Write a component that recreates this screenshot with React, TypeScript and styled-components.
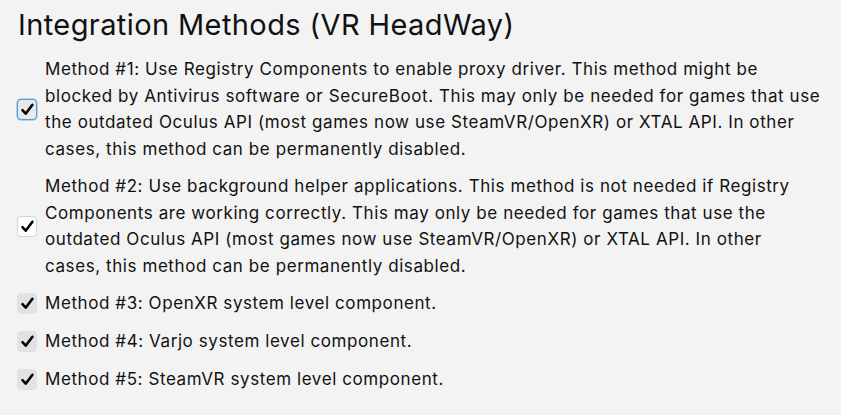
import { createGlobalStyle } from 'styled-components';
import styled from 'styled-components';

const GlobalStyle = createGlobalStyle`
    html, body {
        margin: 0;
        padding: 0;
        background: #f3f3f3;
    }
    body {
        font-family: Inter, "Noto Sans", sans-serif;
        color: #111;
    }
`;

const Page = styled.div`
    box-sizing: border-box;
    width: 841px;
    height: 415px;
    padding: 5px 20px 0 17px;
    display: flex;
    flex-direction: column;
`;

const Title = styled.h1`
    margin: 0 0 11px 1px;
    font-size: 29px;
    font-weight: 400;
    line-height: 40px;
    letter-spacing: 0.4px;
`;

const List = styled.div`
    display: flex;
    flex-direction: column;
    gap: 10px;
`;

const Row = styled.label`
    display: flex;
    align-items: center;
    gap: 8px;
    min-height: 28px;
    cursor: default;
`;

const Box = styled.span<{ $variant: 'focused' | 'plain' | 'muted' }>`
    flex: none;
    box-sizing: border-box;
    width: 20px;
    height: 21px;
    border-radius: 4px;
    display: flex;
    align-items: center;
    justify-content: center;
    background: ${p => p.$variant === 'plain' ? '#ffffff' : p.$variant === 'focused' ? '#e9e9e9' : '#e2e2e2'};
    border: 1px solid ${p => p.$variant === 'focused' ? '#4f9fdc' : p.$variant === 'plain' ? '#d4d4d4' : '#e2e2e2'};
    box-shadow: ${p => p.$variant === 'focused' ? '0 0 0 0.5px #7ab6e6' : 'none'};
`;

const Text = styled.span`
    font-size: 17px;
    letter-spacing: 0.58px;
    line-height: 26.7px;
    color: #111;
`;

const Check = () => (
    <svg width="15" height="15" viewBox="0 0 14 14">
        <path d="M2.3 7.6 L5.3 10.9 L11.6 2.6" fill="none" stroke="#000" strokeWidth="2.4" strokeLinecap="round" strokeLinejoin="round" />
    </svg>
);

const methods: { text: string; variant: 'focused' | 'plain' | 'muted' }[] = [
    {
        text: 'Method #1: Use Registry Components to enable proxy driver. This method might be blocked by Antivirus software or SecureBoot. This may only be needed for games that use the outdated Oculus API (most games now use SteamVR/OpenXR) or XTAL API. In other cases, this method can be permanently disabled.',
        variant: 'focused',
    },
    {
        text: 'Method #2: Use background helper applications. This method is not needed if Registry Components are working correctly. This may only be needed for games that use the outdated Oculus API (most games now use SteamVR/OpenXR) or XTAL API. In other cases, this method can be permanently disabled.',
        variant: 'plain',
    },
    { text: 'Method #3: OpenXR system level component.', variant: 'muted' },
    { text: 'Method #4: Varjo system level component.', variant: 'muted' },
    { text: 'Method #5: SteamVR system level component.', variant: 'muted' },
];

export default function App() {
    return (
        <>
            <GlobalStyle />
            <Page>
                <Title>Integration Methods (VR HeadWay)</Title>
                <List>
                    {methods.map((m, i) => (
                        <Row key={i}>
                            <Box $variant={m.variant}><Check /></Box>
                            <Text>{m.text}</Text>
                        </Row>
                    ))}
                </List>
            </Page>
        </>
    );
}
